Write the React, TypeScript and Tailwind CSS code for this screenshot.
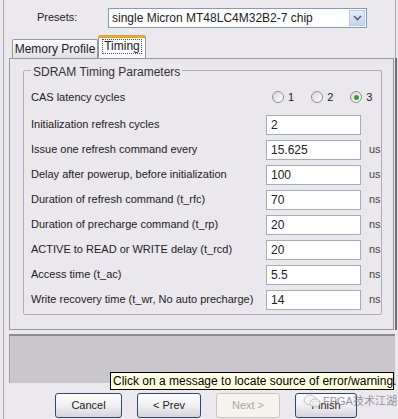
import React from "react";

const rows: { label: string; value: string; unit: string }[] = [
  { label: "Initialization refresh cycles", value: "2", unit: "" },
  { label: "Issue one refresh command every", value: "15.625", unit: "us" },
  { label: "Delay after powerup, before initialization", value: "100", unit: "us" },
  { label: "Duration of refresh command (t_rfc)", value: "70", unit: "ns" },
  { label: "Duration of precharge command (t_rp)", value: "20", unit: "ns" },
  { label: "ACTIVE to READ or WRITE delay (t_rcd)", value: "20", unit: "ns" },
  { label: "Access time (t_ac)", value: "5.5", unit: "ns" },
  { label: "Write recovery time (t_wr, No auto precharge)", value: "14", unit: "ns" },
];

function Radio({ label, checked }: { label: string; checked?: boolean }) {
  return (
    <div className="flex items-center gap-[4px]">
      <div className="w-[12px] h-[12px] rounded-full border border-[#8b9099] bg-gradient-to-br from-[#d8d6d2] to-[#ffffff] flex items-center justify-center">
        {checked && <div className="w-[5px] h-[5px] rounded-full bg-[#2fa22f]" />}
      </div>
      <span>{label}</span>
    </div>
  );
}

function Btn({ label, disabled, w }: { label: string; disabled?: boolean; w: string }) {
  return (
    <div
      className={`${w} h-[25px] rounded-[3px] border flex items-center justify-center ${
        disabled
          ? "border-[#c9c7ba] bg-[#f4f3ee] text-[#aca899]"
          : "border-[#2c4a78] bg-gradient-to-b from-[#ffffff] via-[#f0f0f2] to-[#d4d3dc] text-[#222]"
      }`}
    >
      {label}
    </div>
  );
}

export default function App() {
  return (
    <div
      className="relative w-[398px] h-[419px] overflow-hidden bg-[#ece9ee] text-[11px] text-[#222]"
      style={{ fontFamily: '"Liberation Sans", Arial, sans-serif' }}
    >
      <div className="absolute left-[3px] top-0 bottom-0 w-px bg-[#a9a7ad]" />
      <div className="absolute left-[395px] top-0 h-[58px] w-px bg-[#a9a7ad]" />
      <div className="absolute left-[395px] top-[58px] h-[272px] w-[2px] bg-[#6c6a70]" />

      {/* presets */}
      <div className="flex items-center h-[34px] pl-[37px] pt-[1px]">
        <span className="w-[71px]">Presets:</span>
        <div className="w-[259px] h-[20px] border border-[#7f9db9] bg-white flex items-center">
          <span className="flex-1 pl-[3px] text-[12px]">single Micron MT48LC4M32B2-7 chip</span>
          <div className="w-[16px] h-[16px] mr-[1px] bg-gradient-to-b from-[#e8ecf6] to-[#c6d3f0] border border-[#b9c9ef] flex items-center justify-center">
            <svg width="9" height="6" viewBox="0 0 9 6">
              <path d="M1 1 L4.5 4.5 L8 1" stroke="#4d6185" strokeWidth="1.6" fill="none" />
            </svg>
          </div>
        </div>
      </div>

      {/* tabs */}
      <div className="flex items-end h-[24px] pl-[12px]">
        <div className="w-[86px] h-[19px] border border-b-0 border-[#919b9c] bg-gradient-to-b from-[#fcfcfe] to-[#e2e0e8] flex items-center justify-center text-[12px] rounded-t-[2px]">
          Memory Profile
        </div>
        <div className="w-[48px] h-[23px] border border-b-0 border-[#919b9c] border-t-[3px] border-t-[#e7a530] bg-[#fcfcfe] flex items-start justify-center pt-[1px] text-[12px] rounded-t-[2px]">
          <span className="border border-dotted border-[#555] px-[1px] leading-[13px]">Timing</span>
        </div>
      </div>

      {/* panel */}
      <div className="ml-[9px] w-[385px] h-[272px] border border-[#919b9c] bg-[#eae7ed] pt-[11px] pl-[13px]">
        <div className="relative w-[359px] h-[245px] border border-[#b0adb5] rounded-[2px] pt-[13px] pl-[7px]">
          <span className="absolute left-[7px] top-[-8px] bg-[#eae7ed] px-[2px] text-[12px] text-[#333]">
            SDRAM Timing Parameters
          </span>
          <div className="flex items-center h-[26px]">
            <span className="w-[240px]">CAS latency cycles</span>
            <div className="flex items-center gap-[17px] pl-[1px]">
              <Radio label="1" />
              <Radio label="2" />
              <Radio label="3" checked />
            </div>
          </div>
          <div className="mt-[2px]">
            {rows.map((r) => (
              <div key={r.label} className="flex items-center h-[25px]">
                <span className="w-[235px] whitespace-nowrap">{r.label}</span>
                <div className="w-[95px] h-[20px] border border-[#a5acb2] bg-white flex items-center pl-[4px] text-[12px]">
                  {r.value}
                </div>
                <span className="pl-[8px] text-[#444]">{r.unit}</span>
              </div>
            ))}
          </div>
        </div>
      </div>

      {/* message area */}
      <div className="mt-[4px] ml-[9px] w-[386px] h-[49px] border-t-2 border-t-[#8d8b90] border-l border-l-[#a09ea4] bg-[#c9c7cc]" />

      {/* buttons */}
      <div className="flex items-center mt-[10px] pl-[55px] gap-[15px]">
        <Btn label="Cancel" w="w-[67px]" />
        <Btn label="< Prev" w="w-[64px]" />
        <Btn label="Next >" w="w-[64px]" disabled />
        <Btn label="Finish" w="w-[62px]" />
      </div>

      {/* tooltip */}
      <div className="absolute left-[110px] top-[372px] w-[284px] h-[18px] border border-black bg-[#ffffe1] text-[12px] text-black flex items-center pl-[2px] whitespace-nowrap">
        Click on a message to locate source of error/warning.
      </div>

      {/* watermark */}
      <div
        className="absolute left-[303px] top-[393px] flex items-center gap-[2px] text-[11px] opacity-90"
        style={{ fontFamily: '"Liberation Sans", "Noto Sans CJK SC", sans-serif' }}
      >
        <svg width="18" height="14" viewBox="0 0 18 14">
          <ellipse cx="7" cy="6" rx="6" ry="5" fill="#f4f4f4" stroke="#b0aeb4" strokeWidth="0.8" />
          <ellipse cx="12" cy="9" rx="5" ry="4" fill="#f4f4f4" stroke="#b0aeb4" strokeWidth="0.8" />
        </svg>
        <span className="text-[#8f8d95]">FPGA技术江湖</span>
      </div>
    </div>
  );
}
